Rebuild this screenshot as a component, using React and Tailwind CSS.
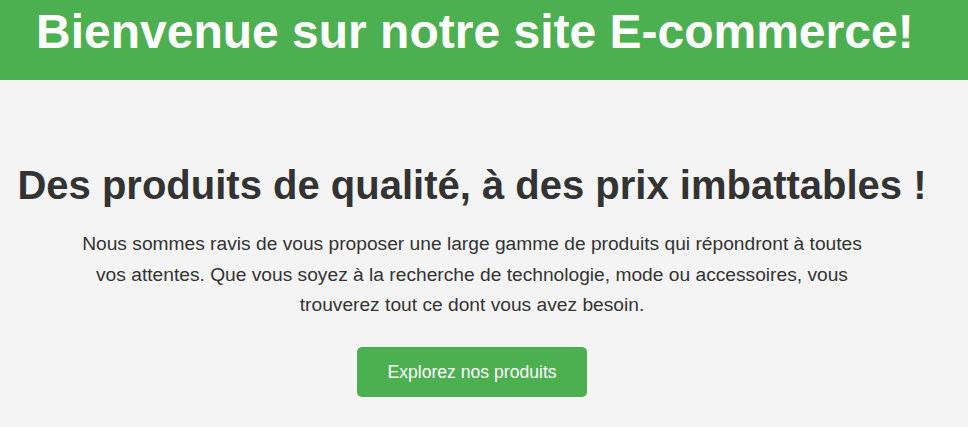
export default function App() {
  return (
    <div className="min-h-[427px] bg-[#f4f4f4] font-['Liberation_Sans',Arial,sans-serif] text-[#333]">
      {/* Header */}
      <header className="h-[80px] bg-[#4caf50] pl-[36px] pt-[4px]">
        <h1 className="text-[48px] font-bold leading-[55px] text-white whitespace-nowrap">
          Bienvenue sur notre site E-commerce!
        </h1>
      </header>

      {/* Hero */}
      <section className="w-[944px] flex flex-col items-center text-center pt-[82px]">
        <h2 className="text-[40px] font-bold leading-[46px] whitespace-nowrap">
          Des produits de qualité, à des prix imbattables !
        </h2>
        <p className="mt-[21px] max-w-[800px] text-[19.2px] leading-[30.72px]">
          Nous sommes ravis de vous proposer une large gamme de produits qui répondront à toutes vos attentes. Que vous soyez à la recherche de technologie, mode ou accessoires, vous trouverez tout ce dont vous avez besoin.
        </p>
        <button className="mt-[26px] rounded-[5px] bg-[#4caf50] px-[30px] py-[15px] text-[17.6px] leading-[20px] text-white">
          Explorez nos produits
        </button>
      </section>
    </div>
  );
}
